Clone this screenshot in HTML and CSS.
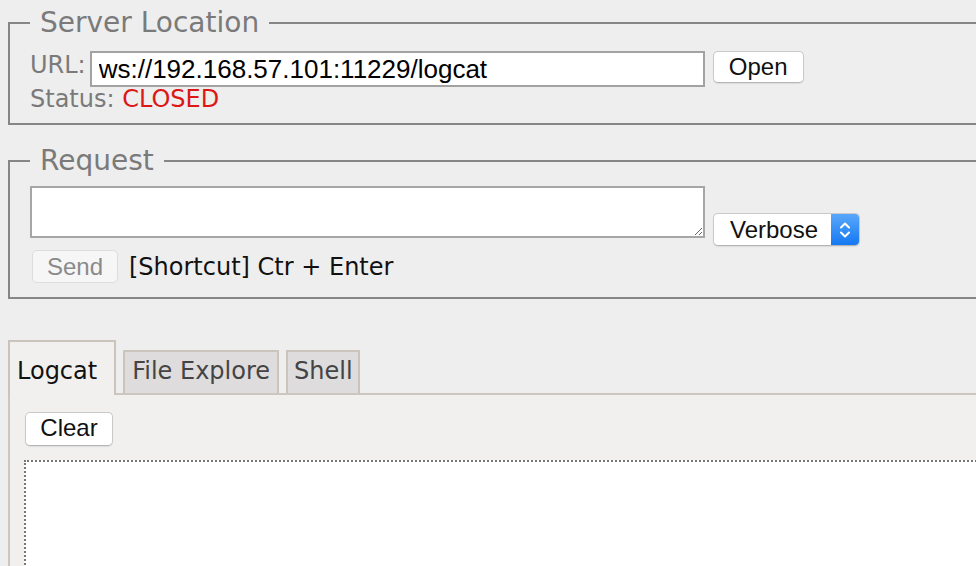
FILE: index.html
```html
<!DOCTYPE html>
<html lang="en">
<head>
<meta charset="utf-8">
<title>WebSocket Console</title>
<link rel="stylesheet" href="styles.css">
</head>
<body>
<div class="page">
  <fieldset class="group group-server">
    <legend class="group-title">Server Location</legend>
    <div class="url-row">
      <label class="label" for="url">URL:</label>
      <input id="url" class="url-input" type="text" value="ws://192.168.57.101:11229/logcat">
      <button class="btn btn-open" type="button">Open</button>
    </div>
    <div class="status">Status: <span class="closed">CLOSED</span></div>
  </fieldset>

  <fieldset class="group group-request">
    <legend class="group-title">Request</legend>
    <div class="req-row">
      <textarea class="req-text"></textarea>
      <div class="select">
        <select class="select-native">
          <option>Verbose</option>
          <option>Debug</option>
          <option>Info</option>
          <option>Warn</option>
          <option>Error</option>
        </select>
        <span class="select-arrows">
          <svg width="12" height="20" viewBox="0 0 12 20" fill="none" stroke="#fff" stroke-width="2" stroke-linecap="round" stroke-linejoin="round"><path d="M2 7.5 L6 3.5 L10 7.5"/><path d="M2 12.5 L6 16.5 L10 12.5"/></svg>
        </span>
      </div>
    </div>
    <div class="send-row">
      <button class="btn btn-send" type="button" disabled>Send</button>
      <span class="shortcut">[Shortcut] Ctr + Enter</span>
    </div>
  </fieldset>

  <div class="tabs">
    <ul class="tab-list">
      <li class="tab tab-active">Logcat</li>
      <li class="tab">File Explore</li>
      <li class="tab tab-shell">Shell</li>
    </ul>
    <div class="panel">
      <button class="btn btn-clear" type="button">Clear</button>
      <div class="log"></div>
    </div>
  </div>
</div>
</body>
</html>
```

FILE: styles.css
```css
html {
  overflow: hidden;
  background: #eeeeee;
}

body {
  margin: 0;
  padding: 0 0 0 8px;
  background: #eeeeee;
  font-family: "DejaVu Sans", sans-serif;
  font-size: 24px;
  color: #777777;
}

.page {
  width: 1100px;
}

.group {
  margin: 0;
  padding: 5px 0 12px 20px;
  border: 2px solid #868686;
  min-inline-size: 0;
}

.group-title {
  padding: 0 10px;
  font-size: 28px;
  line-height: 46px;
  color: #7a7a7a;
}

.url-row {
  display: flex;
  align-items: flex-start;
}

.label {
  line-height: 28px;
  margin-right: 4px;
  color: #7a7a7a;
}

.url-input {
  box-sizing: border-box;
  width: 615px;
  height: 36px;
  margin: 0;
  padding: 1px 7px 0;
  border: 2px solid #a2a2a2;
  background: #ffffff;
  font-family: "Liberation Sans", Arial, sans-serif;
  font-size: 26px;
  color: #000000;
  outline: none;
}

.btn {
  box-sizing: border-box;
  margin: 0;
  border: 1px solid #c9c9c9;
  border-bottom-color: #b5b5b5;
  border-radius: 5px;
  background: #ffffff;
  box-shadow: 0 1px 1px rgba(0, 0, 0, 0.08);
  font-family: "Liberation Sans", Arial, sans-serif;
  font-size: 24px;
  line-height: 24px;
  color: #111111;
}

.btn-open {
  margin-left: 8px;
  width: 91px;
  padding: 3px 0 3px;
}

.status {
  line-height: 24px;
  color: #7a7a7a;
}

.closed {
  color: #dd1616;
}

.group-request {
  margin-top: 13px;
  padding: 2px 0 14px 20px;
}

.req-row {
  display: flex;
  align-items: flex-start;
}

.req-text {
  box-sizing: border-box;
  width: 675px;
  height: 52px;
  margin: 0;
  border: 2px solid #a6a6a6;
  background: #ffffff;
  outline: none;
}

.select {
  display: flex;
  box-sizing: border-box;
  width: 147px;
  height: 33px;
  margin: 27px 0 0 8px;
  border: 1px solid #c9c9c9;
  border-bottom-color: #b5b5b5;
  border-radius: 5px;
  background: #ffffff;
  box-shadow: 0 1px 1px rgba(0, 0, 0, 0.08);
  overflow: hidden;
}

.select-native {
  flex: 1;
  min-width: 0;
  margin: 0;
  padding: 0 0 0 16px;
  border: 0;
  background: transparent;
  -webkit-appearance: none;
  appearance: none;
  font-family: "Liberation Sans", Arial, sans-serif;
  font-size: 24px;
  color: #111111;
  outline: none;
}

.select-arrows {
  display: flex;
  align-items: center;
  justify-content: center;
  width: 28px;
  background: linear-gradient(#5aa7fa, #1478f2);
}

.send-row {
  display: flex;
  align-items: baseline;
  margin-top: 4px;
  margin-left: 2px;
}

.btn-send {
  width: 86px;
  padding: 4px 0 3px;
  border-color: #dddddd;
  background: #f6f6f6;
  box-shadow: none;
  color: #8a8a8a;
}

.shortcut {
  margin-left: 11px;
  line-height: 28px;
  color: #111111;
}

.tabs {
  margin-top: 41px;
}

.tab-list {
  display: flex;
  align-items: flex-end;
  gap: 7px;
  margin: 0;
  padding: 0;
  list-style: none;
  border-bottom: 2px solid #cdc6bf;
}

.tab {
  padding: 4px 7px 7px;
  border: 2px solid #cbc4bd;
  border-bottom: 0;
  background: #dedcdd;
  font-size: 24px;
  line-height: 30px;
  color: #444444;
}

.tab-shell {
  padding-left: 6px;
  padding-right: 5px;
}

.tab-active {
  padding: 14px 17px 9px 7px;
  margin-bottom: -2px;
  background: #f1f0ee;
  color: #111111;
}

.panel {
  padding: 17px 0 0 14px;
  border-left: 2px solid #cdc6bf;
  background: #f1f0ee;
}

.btn-clear {
  display: block;
  width: 88px;
  margin-left: 1px;
  padding: 3px 0 5px;
}

.log {
  height: 300px;
  margin-top: 14px;
  border: 2px dotted #777777;
  background: #ffffff;
}
```
